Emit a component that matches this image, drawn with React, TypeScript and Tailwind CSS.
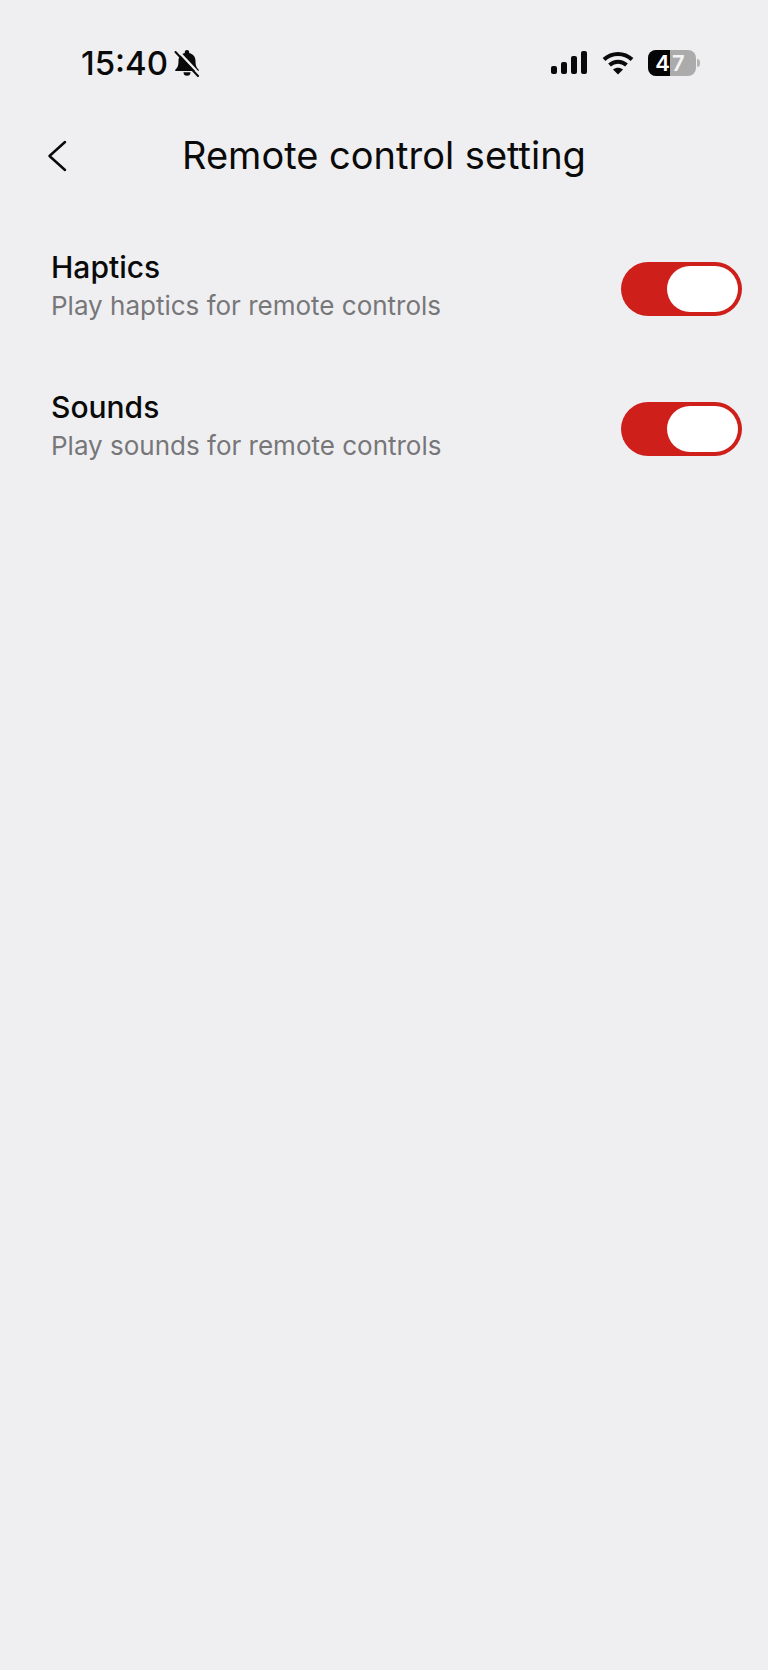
const rows = [
  { title: "Haptics", sub: "Play haptics for remote controls" },
  { title: "Sounds", sub: "Play sounds for remote controls" },
];

function MutedBell() {
  return (
    <svg width="28" height="28" viewBox="0 0 28 28" className="ml-[5px]">
      <path d="M14 1c-1.300 0-2.200.9-2.200 2.200v.8C7.500 5 5.500 8.200 5.500 12c0 4.600-1 6.600-3 8.400-.7.5-.3 1.600.6 1.600h21.800c.9 0 1.300-1.100.6-1.600-2-1.800-3-3.800-3-8.400 0-3.800-2-7-6.300-8v-.8C16.200 1.900 15.300 1 14 1z" fill="#0a0a0a" />
      <path d="M10.500 23.300a3.500 3.500 0 0 0 7 0z" fill="#0a0a0a" />
      <path d="M4.500 1.500 26 24.500" stroke="#efeff1" strokeWidth="2.500" />
      <path d="M2.500 3 25 27" stroke="#0a0a0a" strokeWidth="2" strokeLinecap="round" />
    </svg>
  );
}

function Signal() {
  return (
    <svg width="38" height="26" viewBox="0 0 38 26">
      <rect x="1" y="16" width="6" height="8" rx="2" fill="#0a0a0a" />
      <rect x="11" y="12" width="6" height="12" rx="2" fill="#0a0a0a" />
      <rect x="21" y="6" width="6" height="18" rx="2" fill="#0a0a0a" />
      <rect x="31" y="1" width="6" height="23" rx="2" fill="#0a0a0a" />
    </svg>
  );
}

function Wifi() {
  return (
    <svg width="32" height="26" viewBox="0 0 32 26" fill="none" stroke="#0a0a0a" strokeWidth="4">
      <path d="M2 9.500C10 2 22 2 30 9.500" />
      <path d="M7.500 15C12.500 10.500 19.500 10.500 24.500 15" />
      <path d="M16 24.500 11 19.500C14 17 18 17 21 19.500z" fill="#0a0a0a" stroke="none" />
    </svg>
  );
}

function Battery() {
  return (
    <div className="flex items-center">
      <div className="flex h-[26px] w-[48px] overflow-hidden rounded-[8px] bg-[#ababab] text-[22px] font-semibold leading-[26px] text-white">
        <span className="flex w-[22px] justify-end bg-[#050505]">4</span>
        <span className="pl-[2px] text-[#f4f4f4]">7</span>
      </div>
      <div className="ml-[1px] h-[8px] w-[3px] rounded-r-full bg-[#b5b5b5]" />
    </div>
  );
}

function Toggle() {
  return (
    <div className="mt-[6px] flex h-[54px] w-[121px] shrink-0 items-center justify-end rounded-full bg-[#cf1f1b] pr-[4px]">
      <div className="h-[46px] w-[71px] rounded-full bg-white" />
    </div>
  );
}

export default function App() {
  return (
    <div className="h-[1670px] w-[768px] overflow-hidden bg-[#efeff1] font-['Inter',sans-serif] text-[#0a0a0a]">
      <div className="flex h-[125px] items-start justify-between pl-[81px] pr-[68px] pt-[43px]">
        <div className="flex items-center">
          <span className="text-[33px] font-medium leading-[40px]">15:40</span>
          <MutedBell />
        </div>
        <div className="flex items-center gap-[14px] pt-[7px]">
          <Signal />
          <Wifi />
          <Battery />
        </div>
      </div>
      <div className="relative flex h-[60px] items-center justify-center">
        <svg
          width="20"
          height="32"
          viewBox="0 0 20 32"
          fill="none"
          stroke="#0a0a0a"
          strokeWidth="2.500"
          strokeLinecap="round"
          strokeLinejoin="round"
          className="absolute left-[47px] top-[15px]"
        >
          <path d="M18 2 2.500 16 18 30" />
        </svg>
        <h1 className="text-[38px] font-normal leading-[46px]">Remote control setting</h1>
      </div>
      <div className="mt-[62px] flex flex-col gap-[62px] pl-[51px] pr-[26px]">
        {rows.map((r) => (
          <div key={r.title} className="flex h-[78px] items-center justify-between">
            <div>
              <p className="text-[30px] font-medium leading-[38px]">{r.title}</p>
              <p className="pt-[1px] text-[26px] leading-[37px] text-[#77777a]">{r.sub}</p>
            </div>
            <Toggle />
          </div>
        ))}
      </div>
    </div>
  );
}
